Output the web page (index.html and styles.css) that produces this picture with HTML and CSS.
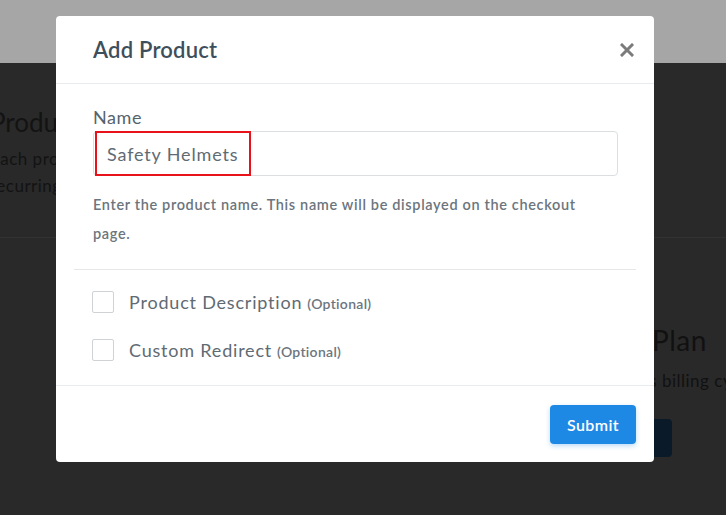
FILE: index.html
```html
<!DOCTYPE html>
<html lang="en">
<head>
    <meta charset="UTF-8">
    <meta name="viewport" content="width=device-width, initial-scale=1.0">
    <title>Add Product</title>
    <link rel="stylesheet" href="styles.css">
</head>
<body>
    <div class="page">
        <div class="topbar"></div>
        <div class="intro">
            <h2 class="intro-title">Products</h2>
            <p class="intro-text">Each product can be sold once or on a<br>recurring schedule.</p>
        </div>
        <div class="plans">
            <div class="plan-col">
                <h2 class="plan-title">Plan</h2>
                <p class="plan-text">its billing cycle</p>
                <div class="plan-btn"></div>
            </div>
        </div>
    </div>

    <div class="modal">
        <div class="modal-header">
            <h1 class="modal-title">Add Product</h1>
            <svg class="close" width="14" height="14" viewBox="0 0 14 14">
                <path d="M2 2 L12 12 M12 2 L2 12" stroke="#7b7b7b" stroke-width="3" stroke-linecap="square"/>
            </svg>
        </div>
        <div class="modal-body">
            <div class="form-group">
                <label class="field-label">Name</label>
                <div class="input-wrap">
                    <input class="text-input" type="text" value="Safety Helmets">
                    <div class="highlight"></div>
                </div>
                <p class="help">Enter the product name. This name will be displayed on the checkout page.</p>
            </div>
            <hr class="divider">
            <div class="form-group">
                <label class="check-row"><span class="box"></span>Product Description <small>(Optional)</small></label>
                <label class="check-row"><span class="box"></span>Custom Redirect <small>(Optional)</small></label>
            </div>
        </div>
        <div class="modal-footer">
            <button class="submit">Submit</button>
        </div>
    </div>
</body>
</html>
```

FILE: styles.css
```css
body {
    margin: 0;
    background-color: #292929;
    font-family: Lato, "Liberation Sans", sans-serif;
    overflow: hidden;
}
.page {
    display: flex;
    flex-direction: column;
    height: 515px;
}
.topbar {
    height: 63px;
    background-color: #a6a6a6;
}
.intro {
    height: 175px;
    border-bottom: 1px solid #323232;
    margin-left: -10px;
    padding-top: 42px;
    box-sizing: border-box;
    color: #131313;
}
.intro-title {
    margin: 0;
    font-size: 26px;
    font-weight: 400;
    line-height: 34px;
}
.intro-text {
    margin: 6px 0 0;
    font-size: 17px;
    line-height: 27px;
    letter-spacing: 0.5px;
}
.plans {
    padding-left: 652px;
    padding-top: 85px;
    color: #111;
}
.plan-title {
    margin: 0;
    font-size: 28px;
    font-weight: 400;
    line-height: 34px;
    letter-spacing: 0.5px;
}
.plan-text {
    margin: 13px 0 0;
    font-size: 17px;
    letter-spacing: 0.5px;
    text-indent: -14px;
    white-space: nowrap;
}
.plan-btn {
    margin-top: 28px;
    margin-left: -100px;
    width: 120px;
    height: 38px;
    background-color: #0a1a28;
    border-radius: 4px;
}

/* modal */
.modal {
    position: absolute;
    top: 16px;
    left: 56px;
    width: 598px;
    background-color: #fff;
    border-radius: 4px;
}
.modal-header {
    height: 68px;
    display: flex;
    align-items: center;
    justify-content: space-between;
    padding: 0 20px 0 37px;
    border-bottom: 1px solid #e9ecee;
    box-sizing: border-box;
}
.modal-title {
    margin: 0;
    font-size: 22px;
    font-weight: 600;
    letter-spacing: 0.2px;
    color: #3e4f5b;
}
.modal-body {
    padding: 20px 18px 11px;
}
.form-group {
    padding: 0 18px 0 19px;
}
.field-label {
    display: block;
    font-size: 18px;
    line-height: 27px;
    letter-spacing: 0.6px;
    color: #56636d;
}
.input-wrap {
    position: relative;
}
.text-input {
    display: block;
    width: 100%;
    height: 45px;
    box-sizing: border-box;
    border: 1px solid #dcdfe1;
    border-radius: 4px;
    padding: 0 13px;
    font-family: inherit;
    font-size: 18px;
    letter-spacing: 0.85px;
    color: #5f6b73;
}
.highlight {
    position: absolute;
    top: 0;
    left: 2px;
    width: 156px;
    height: 45px;
    box-sizing: border-box;
    border: 2px solid #e8121b;
}
.help {
    margin: 14px 0 0;
    max-width: 500px;
    font-size: 14.5px;
    font-weight: 600;
    line-height: 29px;
    letter-spacing: 0.65px;
    color: #6c757d;
}
.divider {
    margin: 21px 0 8px;
    border: none;
    border-top: 1px solid #e5e7e9;
}
.check-row {
    display: flex;
    align-items: center;
    height: 48px;
    font-size: 18px;
    letter-spacing: 0.8px;
    color: #5f6b73;
}
.check-row small {
    font-size: 14px;
    font-weight: 600;
    letter-spacing: 0.3px;
    color: #6c757d;
    margin-left: 5px;
    margin-top: 2px;
}
.box {
    width: 20px;
    height: 20px;
    border: 1px solid #cfd3d6;
    border-radius: 2px;
    margin-left: -1px;
    margin-right: 15px;
}
.modal-footer {
    display: flex;
    justify-content: flex-end;
    padding: 19px 18px 18px;
    border-top: 1px solid #e9ecee;
}
.submit {
    width: 86px;
    height: 39px;
    border: none;
    border-radius: 4px;
    background-color: #1e88e5;
    color: #fff;
    font-family: inherit;
    font-size: 16px;
    font-weight: 600;
    letter-spacing: 0.4px;
    box-shadow: 0 2px 5px rgba(30, 136, 229, 0.3);
}
```
